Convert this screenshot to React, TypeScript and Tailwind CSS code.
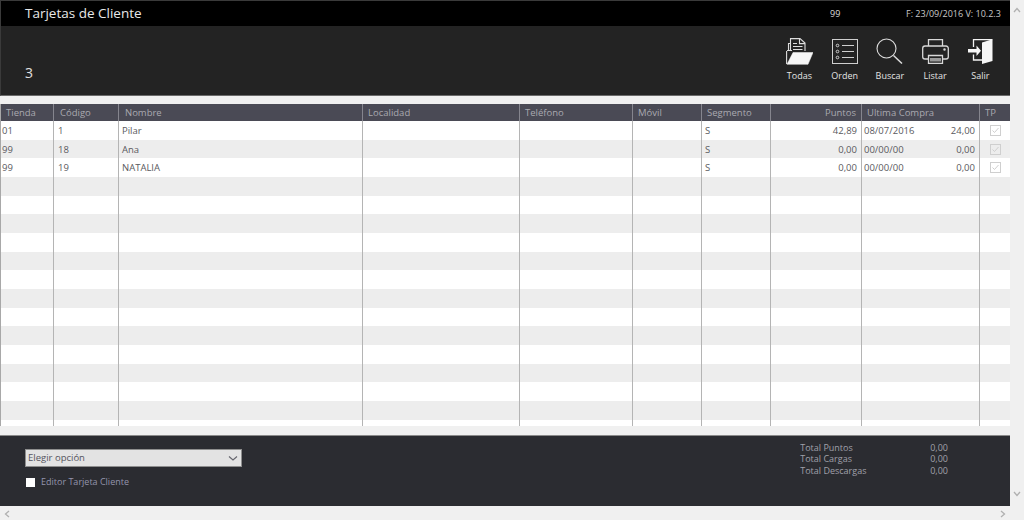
import React from "react";

const grid = "grid grid-cols-[53px_65px_244px_157px_113px_69px_69px_91px_118px_31px]";
const cols = ["Tienda", "Código", "Nombre", "Localidad", "Teléfono", "Móvil", "Segmento", "Puntos", "Ultima Compra", "TP"];
const data = [
  ["01", "1", "Pilar", "42,89", "08/07/2016", "24,00"],
  ["99", "18", "Ana", "0,00", "00/00/00", "0,00"],
  ["99", "19", "NATALIA", "0,00", "00/00/00", "0,00"],
];
const rows = Array.from({ length: 17 }, (_, i) => data[i] ?? null);

function Tool({ label, children }: { label: string; children: React.ReactNode }) {
  return (
    <div className="flex w-[45.25px] flex-col items-center">
      <div className="flex h-[30px] w-[30px] items-center justify-center">{children}</div>
      <span className="mt-[3px] text-[9px] leading-[14px] font-medium text-[#e4e4e4]">{label}</span>
    </div>
  );
}

const Folder = () => (
  <svg width="27" height="27" viewBox="0 0 27 27" fill="none" stroke="#dcdcdc" strokeWidth="1.1">
    <path d="M4.5 13V0.6h9.5l5 4.5v8" />
    <path d="M13.5 0.6v5h5.5M7 5.5h4M7 8.5h9.5M7 11.5h9.5" />
    <path d="M4.5 5.5H2.5V12M1 12.5h5M0.6 13v13" />
    <path d="M7 14.5h20l-5 11.8H1z" fill="#f6f6f6" stroke="#f6f6f6" strokeWidth="0.5" />
  </svg>
);
const Order = () => (
  <svg width="26" height="25" viewBox="0 0 26 25" fill="none" stroke="#cfcfcf" strokeWidth="1">
    <rect x="0.5" y="0.5" width="25" height="24" />
    <circle cx="5.5" cy="6.5" r="1.3" />
    <circle cx="5.5" cy="12.5" r="1.3" />
    <circle cx="5.5" cy="18.5" r="1.3" />
    <path d="M10 6.5h12M10 12.5h12M10 18.5h12" strokeWidth="1.2" />
  </svg>
);
const Search = () => (
  <svg width="27" height="26" viewBox="0 0 27 26" fill="none" stroke="#dcdcdc">
    <circle cx="10.5" cy="10.5" r="9.5" strokeWidth="1.1" />
    <path d="M17.5 17.5l8.5 8" strokeWidth="1.5" />
  </svg>
);
const Printer = () => (
  <svg width="27" height="25" viewBox="0 0 27 25" fill="none" stroke="#d8d8d8" strokeWidth="1.3">
    <path d="M6.5 7V0.7h14V7" />
    <path d="M6 20H3a2.3 2.3 0 0 1-2.3-2.3V9.3A2.3 2.3 0 0 1 3 7h21a2.3 2.3 0 0 1 2.3 2.3v8.4A2.3 2.3 0 0 1 24 20h-3" />
    <path d="M6.5 16.5h14v7.8h-14z" />
    <path d="M8 19h11v3.5H8z" fill="#9a9a9a" stroke="none" />
    <circle cx="22.5" cy="10.5" r="0.6" fill="#d8d8d8" />
  </svg>
);
const Exit = () => (
  <svg width="25" height="25" viewBox="0 0 25 25" fill="none">
    <path d="M5.5 8V0.7H24.3M5.5 15.5V21H14" stroke="#f4f4f4" strokeWidth="1.3" />
    <path d="M14 3.5L24.5 0.2V22L14 25z" fill="#f6f6f6" />
    <path d="M0 10h8.5V6.5L13 11.7 8.5 17V13.5H0z" fill="#f6f6f6" />
  </svg>
);

export default function App() {
  return (
    <div className="flex h-[520px] w-[1024px] overflow-hidden bg-[#f0f0f0] font-['Open_Sans','Noto_Sans',sans-serif]">
      <div className="flex w-[1010px] flex-col">
        <header className="flex h-[96px] shrink-0 flex-col border-y border-l border-[#3a3a3a] border-b-[#6a6a6a] bg-[#232323]">
          <div className="flex h-[25px] items-center bg-black pl-[24px]">
            <span className="w-[805px] text-[13.5px] text-[#e8e8e8]">Tarjetas de Cliente</span>
            <span className="w-[76px] text-[9px] text-[#dcdcdc]">99</span>
            <span className="text-[9px] text-[#c8c8c8]">F: 23/09/2016 V: 10.2.3</span>
          </div>
          <div className="flex flex-1 items-start justify-between">
            <div className="mt-[38px] ml-[24px] text-[14px] leading-[18px] text-[#e0e0e0]">3</div>
            <div className="mt-[10px] mr-[7px] flex">
              <Tool label="Todas"><Folder /></Tool>
              <Tool label="Orden"><Order /></Tool>
              <Tool label="Buscar"><Search /></Tool>
              <Tool label="Listar"><Printer /></Tool>
              <Tool label="Salir"><Exit /></Tool>
            </div>
          </div>
        </header>
        <div className="mt-[8px] flex h-[322px] shrink-0 flex-col overflow-hidden border-l border-[#a8a8a8]">
          <div className={`${grid} h-[17px] shrink-0 bg-[#4a4a55] text-[9.5px] leading-[17px] text-[#a9a9b0]`}>
            {cols.map((c, i) => (
              <div
                key={c}
                className={`border-r border-[#85858e] ${i === 1 || i === 2 ? "pl-[6px]" : "pl-[5px]"} ${i === 7 ? "pr-[5px] text-right" : ""} ${i === 9 ? "border-r-0" : ""}`}
              >
                {c}
              </div>
            ))}
          </div>
          <div className="h-[305px] overflow-hidden">
            {rows.map((r, i) => (
              <div
                key={i}
                className={`${grid} h-[18.67px] text-[9.5px] leading-[19px] text-[#5a5a5e] ${i % 2 ? "bg-[#ededed]" : "bg-white"}`}
              >
                <div className="border-r border-[#b4b4b4] pl-[1px]">{r?.[0]}</div>
                <div className="border-r border-[#b4b4b4] pl-[4px]">{r?.[1]}</div>
                <div className="border-r border-[#b4b4b4] pl-[3px]">{r?.[2]}</div>
                <div className="border-r border-[#b4b4b4]"></div>
                <div className="border-r border-[#b4b4b4]"></div>
                <div className="border-r border-[#b4b4b4]"></div>
                <div className="border-r border-[#b4b4b4] pl-[3px]">{r ? "S" : ""}</div>
                <div className="border-r border-[#b4b4b4] pr-[4px] text-right">{r?.[3]}</div>
                <div className="flex justify-between border-r border-[#b4b4b4] pr-[4px] pl-[2px]">
                  <span>{r?.[4]}</span>
                  <span>{r?.[5]}</span>
                </div>
                <div className="flex items-center pl-[10px]">
                  {r && (
                    <svg width="11" height="11" viewBox="0 0 11 11" fill="none">
                      <rect x="0.5" y="0.5" width="10" height="10" stroke="#cfcfcf" />
                      <path d="M2.5 5.5l2 2 4-4.5" stroke="#cfcfcf" />
                    </svg>
                  )}
                </div>
              </div>
            ))}
          </div>
        </div>
        <footer className="mt-[9px] flex h-[71px] shrink-0 justify-between border-t border-[#8a8a8a] bg-[#2b2c31] pl-[25px]">
          <div className="flex flex-col">
            <div className="mt-[13px] flex h-[18px] w-[217px] items-center justify-between border border-[#8e8e8e] bg-[#e3e3e3] pr-[3px] pl-[2px]">
              <span className="text-[9.5px] font-medium text-[#55555f]">Elegir opción</span>
              <svg width="10" height="7" viewBox="0 0 10 7" fill="none" stroke="#66666e" strokeWidth="1.1">
                <path d="M1 1.5l4 3.5 4-3.5" />
              </svg>
            </div>
            <div className="mt-[8px] flex items-center gap-[6px] pl-[1px]">
              <span className="h-[9px] w-[9px] bg-white"></span>
              <span className="text-[9px] leading-[14px] text-[#9494ac]">Editor Tarjeta Cliente</span>
            </div>
          </div>
          <div className="mt-[6px] mr-[62px] grid h-fit grid-cols-[130px_auto] text-[9px] leading-[11.3px] text-[#a0a0aa]">
            <span>Total Puntos</span><span>0,00</span>
            <span>Total Cargas</span><span>0,00</span>
            <span>Total Descargas</span><span>0,00</span>
          </div>
        </footer>
        <div className="flex h-[14px] shrink-0 items-center justify-between px-[4px] pt-[1px]">
          <svg width="6" height="8" viewBox="0 0 6 8" fill="none" stroke="#b0b0b0" strokeWidth="1.3"><path d="M5 1L1.5 4 5 7" /></svg>
          <svg width="6" height="8" viewBox="0 0 6 8" fill="none" stroke="#b0b0b0" strokeWidth="1.3"><path d="M1 1l3.5 3L1 7" /></svg>
        </div>
      </div>
      <div className="flex h-[506px] w-[14px] flex-col items-center justify-between bg-[#f0f0f0] px-[3px] pt-[7px] pb-[9px]">
        <svg width="8" height="6" viewBox="0 0 8 6" fill="none" stroke="#b0b0b0" strokeWidth="1.3"><path d="M1 5l3-3.5L7 5" /></svg>
        <svg width="8" height="6" viewBox="0 0 8 6" fill="none" stroke="#b0b0b0" strokeWidth="1.3"><path d="M1 1l3 3.5L7 1" /></svg>
      </div>
    </div>
  );
}
